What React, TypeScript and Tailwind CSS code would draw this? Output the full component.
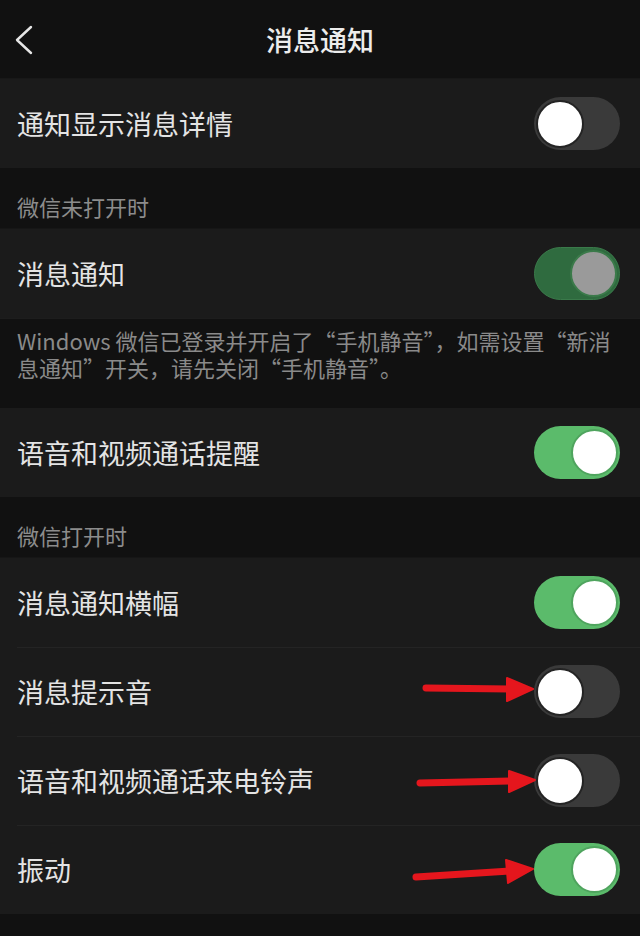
import React from "react";

type ToggleState = "on" | "off" | "dim";

function Toggle({ state }: { state: ToggleState }) {
  if (state === "off") {
    return (
      <div className="w-[86px] h-[53px] rounded-full bg-[#3a3a3a] flex items-center pl-[2px] shrink-0">
        <div className="w-[48px] h-[48px] rounded-full bg-white border-[2px] border-[#242424]" />
      </div>
    );
  }
  if (state === "dim") {
    return (
      <div className="w-[86px] h-[53px] rounded-full bg-[#2f6b3f] border border-[#3a7a4a] flex items-center justify-end pr-[2px] shrink-0">
        <div className="w-[47px] h-[47px] rounded-full bg-[#9a9a9a] border-[2px] border-[#3b7a4a]" />
      </div>
    );
  }
  return (
    <div className="w-[86px] h-[53px] rounded-full bg-[#5bbb6b] flex items-center justify-end pr-[2px] shrink-0">
      <div className="w-[47px] h-[47px] rounded-full bg-white border-[2px] border-[#4fa45e]" />
    </div>
  );
}

function Row({ label, state, first }: { label: string; state: ToggleState; first?: boolean }) {
  return (
    <div className="relative h-[89px] bg-[#1b1b1b] flex items-center justify-between pl-[17px] pr-[20px]">
      {!first && <div className="absolute top-0 left-[17px] right-0 h-px bg-[#242424]" />}
      <span className="text-[27px] text-[#e4e4e4] leading-none">{label}</span>
      <Toggle state={state} />
    </div>
  );
}

function Section({ label }: { label: string }) {
  return (
    <div className="h-[61px] flex items-end pl-[17px] pb-[8px] text-[22px] text-[#8c8c8c] leading-none border-b border-[#161616]">
      <span className="mb-[3px]">{label}</span>
    </div>
  );
}

export default function App() {
  return (
    <div
      className="relative w-[640px] h-[936px] bg-[#111111] overflow-hidden"
      style={{ fontFamily: '"Noto Sans CJK SC", "Noto Sans", sans-serif' }}
    >
      <div className="h-[79px] flex items-center justify-center relative border-b border-[#181818]">
        <svg className="absolute left-0 top-0" width="50" height="79" viewBox="0 0 50 79">
          <polyline points="31,27 17,40 31,53" fill="none" stroke="#e6e6e6" strokeWidth="2.4" strokeLinecap="round" strokeLinejoin="round" />
        </svg>
        <span className="text-[27px] text-[#ececec] font-medium leading-none mt-[1px]">消息通知</span>
      </div>

      <Row label="通知显示消息详情" state="off" first />

      <Section label="微信未打开时" />
      <Row label="消息通知" state="dim" first />
      <div className="h-[90px] pl-[17px] pt-[8px] text-[22px] text-[#8a8a8a] whitespace-nowrap border-t border-[#1d1d1d] flex flex-col">
        <div className="h-[27px] leading-[27px]">Windows 微信已登录并开启了“手机静音”，如需设置“新消</div>
        <div className="h-[27px] leading-[27px]">息通知”开关，请先关闭“手机静音”。</div>
      </div>
      <Row label="语音和视频通话提醒" state="on" first />

      <Section label="微信打开时" />
      <Row label="消息通知横幅" state="on" first />
      <Row label="消息提示音" state="off" />
      <Row label="语音和视频通话来电铃声" state="off" />
      <Row label="振动" state="on" />

      <svg className="absolute left-0 top-0 pointer-events-none" width="640" height="936" viewBox="0 0 640 936">
        <g fill="#e5161d" stroke="#e5161d" strokeLinecap="round" strokeLinejoin="round">
          <line x1="426" y1="688" x2="512" y2="689" strokeWidth="7" />
          <polygon points="507,678 533,689 507,701" strokeWidth="2" />
          <line x1="420" y1="783" x2="513" y2="781" strokeWidth="7" />
          <polygon points="509,771 535,780 509,792" strokeWidth="2" />
          <line x1="416" y1="877" x2="511" y2="871" strokeWidth="7" />
          <polygon points="506,860 533,869 508,883" strokeWidth="2" />
        </g>
      </svg>
    </div>
  );
}
